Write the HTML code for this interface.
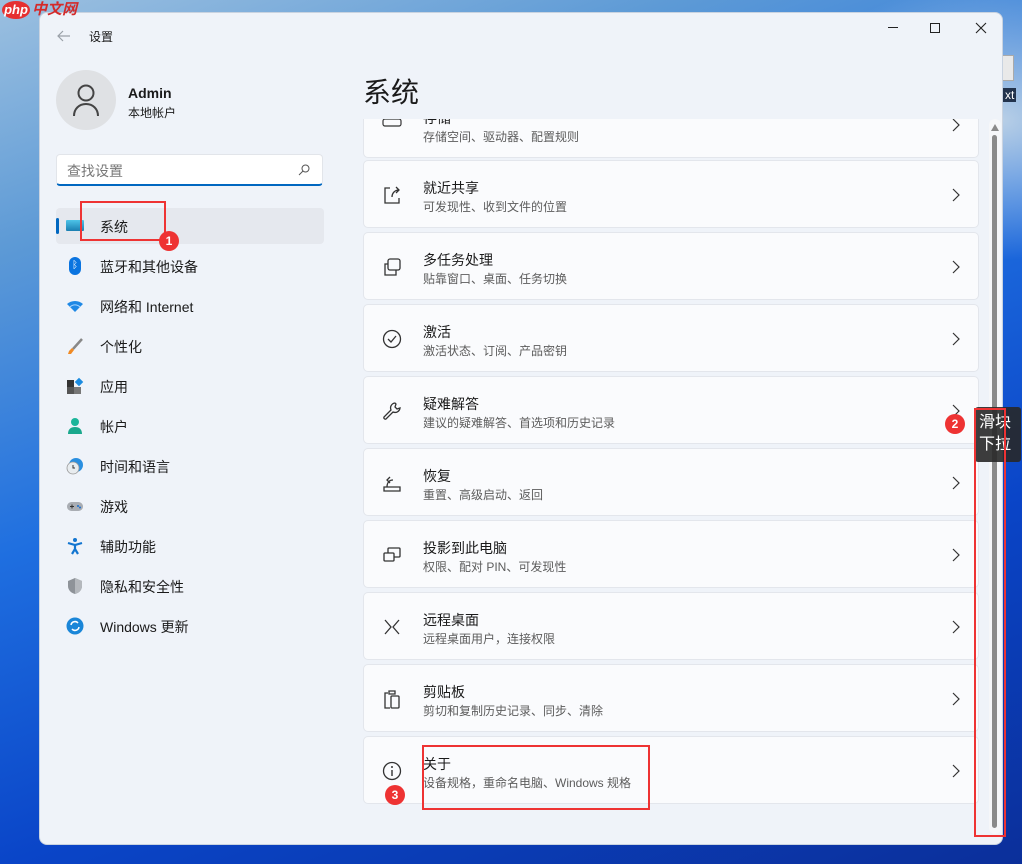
<!DOCTYPE html>
<html><head><meta charset="utf-8"><style>
*{box-sizing:border-box;margin:0;padding:0}
body{width:1022px;height:864px;overflow:hidden;position:relative;font-family:"Liberation Sans","Noto Sans CJK SC",sans-serif;
background:radial-gradient(ellipse 300px 200px at 1000px 120px,#b8cfe6 0%,transparent 70%),linear-gradient(160deg,#9cc0e0 0%,#5d9ad6 20%,#1f6fe0 45%,#0a45c8 70%,#0b2f9a 100%);}
.win{position:absolute;left:39px;top:12px;width:964px;height:833px;background:#eff3f9;border-radius:8px;overflow:hidden;border:1px solid #c9d3e0}
.abs{position:absolute}
.t{color:#1a1a1a}
.nav{position:absolute;left:16px;width:268px;height:36px;font-size:14px;color:#1a1a1a}
.nav .ic{position:absolute;left:10px;top:9px;width:18px;height:18px}
.nav span{position:absolute;left:44px;top:9px}
.card{position:absolute;left:323px;width:616px;height:68px;background:#fafbfd;border:1px solid #e3e6ec;border-radius:5px}
.card .h{position:absolute;left:59px;top:17px;font-size:14px;color:#1a1a1a}
.card .s{position:absolute;left:59px;top:37px;font-size:12px;color:#5c5c5c}
.card .ico{position:absolute;left:18px;top:24px;width:20px;height:20px}
.card .chev{position:absolute;right:18px;top:27px;width:8px;height:14px}
.red{position:absolute;border:2px solid #ee3333}
.badge{position:absolute;width:20px;height:20px;border-radius:50%;background:#ee3333;color:#fff;font-size:12px;text-align:center;line-height:20px;font-weight:bold}
</style></head><body>
<div class="abs" style="left:1000px;top:55px;width:14px;height:26px;background:#e9e9e9;border:1px solid #aaa"></div>
<div class="abs" style="left:1003px;top:88px;font-size:12px;color:#fff;background:#22334d;padding:0 2px">xt</div>

<div class="win">
 <svg class="abs" style="left:17px;top:17px" width="14" height="12"><path d="M13 6H1M6 1L1 6l5 5" stroke="#9aa0a8" stroke-width="1.2" fill="none"/></svg>
 <div class="abs t" style="left:49px;top:15px;font-size:12px">设置</div>
 <svg class="abs" style="left:848px;top:14px" width="12" height="2"><rect width="10" height="1" fill="#222"/></svg>
 <div class="abs" style="left:890px;top:10px;width:10px;height:10px;border:1px solid #222"></div>
 <svg class="abs" style="left:935px;top:9px" width="12" height="12"><path d="M1 1l10 10M11 1L1 11" stroke="#222" stroke-width="1.1"/></svg>

 <div class="abs" style="left:16px;top:57px;width:60px;height:60px;border-radius:50%;background:#dfe1e4"></div>
 <svg class="abs" style="left:31px;top:70px" width="30" height="34"><circle cx="15" cy="10" r="7.5" stroke="#444" stroke-width="2" fill="none"/><path d="M3 33c0-7 5-12 12-12s12 5 12 12" stroke="#444" stroke-width="2" fill="none"/></svg>
 <div class="abs t" style="left:88px;top:72px;font-size:14px;font-weight:bold">Admin</div>
 <div class="abs t" style="left:88px;top:91px;font-size:12px">本地帐户</div>

 <div class="abs" style="left:16px;top:141px;width:267px;height:32px;background:#fff;border:1px solid #e2e5ea;border-bottom:2px solid #0067c0;border-radius:4px"></div>
 <div class="abs" style="left:27px;top:148px;font-size:14px;color:#777">查找设置</div>
 <svg class="abs" style="left:258px;top:151px" width="12" height="12"><circle cx="7.5" cy="4.5" r="3.5" stroke="#555" fill="none"/><path d="M5 7L1 11" stroke="#555"/></svg>

 <div class="nav" style="top:195px;background:#e5e8ee;border-radius:4px"><div class="abs" style="left:0;top:10px;width:3px;height:16px;background:#0067c0;border-radius:2px"></div><div class="ic" style="top:12px;height:11px;background:linear-gradient(#4ec4e8,#1b7fb2);border-radius:1px"></div><span>系统</span></div>
 <div class="nav" style="top:235px"><div class="ic" style="left:13px;width:12px;border-radius:6px;background:#0a74e0;color:#fff;font-size:10px;text-align:center;line-height:18px">ᛒ</div><span>蓝牙和其他设备</span></div>
 <div class="nav" style="top:275px"><svg class="ic" viewBox="0 0 18 18"><path d="M1 7a12 12 0 0 1 16 0L9 15z" fill="#1e88e5"/><path d="M4 10a7 7 0 0 1 10 0" stroke="#a9d6ff" fill="none"/></svg><span>网络和 Internet</span></div>
 <div class="nav" style="top:315px"><svg class="ic" viewBox="0 0 18 18"><path d="M16 2L7 12" stroke="#888" stroke-width="2.5"/><path d="M6 11l2 2-3 4-3 0 1-3z" fill="#f08a24"/></svg><span>个性化</span></div>
 <div class="nav" style="top:355px"><svg class="ic" viewBox="0 0 18 18"><rect x="1" y="3" width="7" height="7" fill="#333"/><rect x="1" y="10" width="7" height="7" fill="#555"/><rect x="8" y="10" width="7" height="7" fill="#777"/><rect x="10" y="2" width="6" height="6" fill="#1b8be0" transform="rotate(45 13 5)"/></svg><span>应用</span></div>
 <div class="nav" style="top:395px"><svg class="ic" viewBox="0 0 18 18"><circle cx="9" cy="5" r="4" fill="#1bb59a"/><path d="M2 17c0-5 3-7 7-7s7 2 7 7z" fill="#1aa88d"/></svg><span>帐户</span></div>
 <div class="nav" style="top:435px"><svg class="ic" viewBox="0 0 18 18"><circle cx="10" cy="8" r="7" fill="#2a8fe0"/><circle cx="7" cy="11" r="6" fill="#e8ecef" stroke="#999" stroke-width=".8"/><path d="M7 8v3h2" stroke="#333" fill="none"/></svg><span>时间和语言</span></div>
 <div class="nav" style="top:475px"><svg class="ic" viewBox="0 0 18 18"><rect x="1" y="5" width="16" height="9" rx="4.5" fill="#a9adb3"/><path d="M4 9.5h4M6 7.5v4" stroke="#333"/><circle cx="12" cy="9" r="1" fill="#1b6fd0"/><circle cx="14" cy="10.5" r="1" fill="#1b6fd0"/></svg><span>游戏</span></div>
 <div class="nav" style="top:515px"><svg class="ic" viewBox="0 0 18 18"><circle cx="9" cy="3" r="2" fill="#1275d0"/><path d="M2 6l7 2 7-2M9 8v4l-3 5M9 12l3 5" stroke="#1275d0" stroke-width="2.2" fill="none"/></svg><span>辅助功能</span></div>
 <div class="nav" style="top:555px"><svg class="ic" viewBox="0 0 18 18"><path d="M9 1l7 3v5c0 4-3 7-7 8-4-1-7-4-7-8V4z" fill="#8e9399"/><path d="M9 1l7 3v5c0 4-3 7-7 8z" fill="#b4b8bd"/></svg><span>隐私和安全性</span></div>
 <div class="nav" style="top:595px"><svg class="ic" viewBox="0 0 18 18"><circle cx="9" cy="9" r="8.5" fill="#1a86d8"/><path d="M5 8a4 4 0 0 1 7-2M13 10a4 4 0 0 1-7 2" stroke="#fff" stroke-width="1.5" fill="none"/></svg><span>Windows 更新</span></div>

 <div class="abs t" style="left:323px;top:58px;font-size:28px">系统</div>

 <div class="abs" style="left:0;top:106px;width:964px;height:727px;overflow:hidden">
  <div class="card" style="top:-29px"><svg class="ico" viewBox="0 0 20 20" style="top:22px"><rect x="1" y="6" width="18" height="7" rx="2" stroke="#333" fill="none" stroke-width="1.2"/></svg><div class="h">存储</div><div class="s">存储空间、驱动器、配置规则</div><svg class="chev" viewBox="0 0 8 14"><path d="M1 1l6 6-6 6" stroke="#333" fill="none" stroke-width="1.2"/></svg></div>
  <div class="card" style="top:41px"><svg class="ico" viewBox="0 0 20 20"><path d="M8 3H3v15h14v-5M10 12c0-4 3-7 7-7M14 2l3 3-3 3" stroke="#333" fill="none" stroke-width="1.3"/></svg><div class="h">就近共享</div><div class="s">可发现性、收到文件的位置</div><svg class="chev" viewBox="0 0 8 14"><path d="M1 1l6 6-6 6" stroke="#333" fill="none" stroke-width="1.2"/></svg></div>
  <div class="card" style="top:113px"><svg class="ico" viewBox="0 0 20 20"><rect x="6" y="2" width="12" height="11" rx="2" stroke="#333" fill="none" stroke-width="1.3"/><path d="M6 7H3v11h11v-5" stroke="#333" fill="none" stroke-width="1.3"/></svg><div class="h">多任务处理</div><div class="s">贴靠窗口、桌面、任务切换</div><svg class="chev" viewBox="0 0 8 14"><path d="M1 1l6 6-6 6" stroke="#333" fill="none" stroke-width="1.2"/></svg></div>
  <div class="card" style="top:185px"><svg class="ico" viewBox="0 0 20 20"><circle cx="10" cy="10" r="8.5" stroke="#333" fill="none" stroke-width="1.3"/><path d="M6 10l3 3 5-6" stroke="#333" fill="none" stroke-width="1.3"/></svg><div class="h">激活</div><div class="s">激活状态、订阅、产品密钥</div><svg class="chev" viewBox="0 0 8 14"><path d="M1 1l6 6-6 6" stroke="#333" fill="none" stroke-width="1.2"/></svg></div>
  <div class="card" style="top:257px"><svg class="ico" viewBox="0 0 20 20"><path d="M13 2a5 5 0 0 0-4 7L2 16a1.5 1.5 0 0 0 2 2l7-7a5 5 0 0 0 7-4l-3 1-2-2 1-3z" stroke="#333" fill="none" stroke-width="1.3"/></svg><div class="h">疑难解答</div><div class="s">建议的疑难解答、首选项和历史记录</div><svg class="chev" viewBox="0 0 8 14"><path d="M1 1l6 6-6 6" stroke="#333" fill="none" stroke-width="1.2"/></svg></div>
  <div class="card" style="top:329px"><svg class="ico" viewBox="0 0 20 20"><path d="M2 14h16v4H2zM5 14c0-4 2-7 6-7M8 4L5 7l3 3" stroke="#333" fill="none" stroke-width="1.3"/></svg><div class="h">恢复</div><div class="s">重置、高级启动、返回</div><svg class="chev" viewBox="0 0 8 14"><path d="M1 1l6 6-6 6" stroke="#333" fill="none" stroke-width="1.2"/></svg></div>
  <div class="card" style="top:401px"><svg class="ico" viewBox="0 0 20 20"><rect x="6" y="3" width="12" height="9" rx="1" stroke="#333" fill="none" stroke-width="1.3"/><rect x="2" y="8" width="10" height="8" rx="1" stroke="#333" fill="#fafbfd" stroke-width="1.3"/></svg><div class="h">投影到此电脑</div><div class="s">权限、配对 PIN、可发现性</div><svg class="chev" viewBox="0 0 8 14"><path d="M1 1l6 6-6 6" stroke="#333" fill="none" stroke-width="1.2"/></svg></div>
  <div class="card" style="top:473px"><svg class="ico" viewBox="0 0 20 20"><path d="M3 3l6 7-6 7M17 3l-6 7 6 7" stroke="#333" fill="none" stroke-width="1.3"/></svg><div class="h">远程桌面</div><div class="s">远程桌面用户，连接权限</div><svg class="chev" viewBox="0 0 8 14"><path d="M1 1l6 6-6 6" stroke="#333" fill="none" stroke-width="1.2"/></svg></div>
  <div class="card" style="top:545px"><svg class="ico" viewBox="0 0 20 20"><path d="M6 4H3v15h5M7 2h6v3H7z" stroke="#333" fill="none" stroke-width="1.3"/><rect x="9" y="7" width="8" height="12" rx="1" stroke="#333" fill="none" stroke-width="1.3"/></svg><div class="h">剪贴板</div><div class="s">剪切和复制历史记录、同步、清除</div><svg class="chev" viewBox="0 0 8 14"><path d="M1 1l6 6-6 6" stroke="#333" fill="none" stroke-width="1.2"/></svg></div>
  <div class="card" style="top:617px"><svg class="ico" viewBox="0 0 20 20"><circle cx="10" cy="10" r="8.5" stroke="#333" fill="none" stroke-width="1.3"/><path d="M10 9v6" stroke="#333" stroke-width="1.4"/><circle cx="10" cy="6" r="1" fill="#333"/></svg><div class="h">关于</div><div class="s">设备规格，重命名电脑、Windows 规格</div><svg class="chev" viewBox="0 0 8 14"><path d="M1 1l6 6-6 6" stroke="#333" fill="none" stroke-width="1.2"/></svg></div>
 </div>
 <div class="abs" style="left:949px;top:106px;width:12px;height:715px;background:#f6f7f9;border-radius:6px"></div>
 <svg class="abs" style="left:951px;top:111px" width="8" height="7"><path d="M4 0L8 7H0z" fill="#8a8a8a"/></svg>
 <div class="abs" style="left:952px;top:122px;width:5px;height:693px;background:#8a8a8a;border-radius:3px"></div>
</div>

<div class="abs" style="left:2px;top:1px;width:28px;height:18px;background:#e63030;border-radius:50%;color:#fff;font-size:13px;font-style:italic;font-weight:bold;text-align:center;line-height:17px;z-index:5">php</div>
<div class="abs" style="left:32px;top:2px;font-size:15px;line-height:16px;color:#d42a2a;font-style:italic;font-weight:bold;z-index:5">中文网</div>
<div class="red" style="left:80px;top:201px;width:86px;height:40px"></div>
<div class="badge" style="left:159px;top:231px">1</div>
<div class="abs" style="left:975px;top:407px;width:46px;height:55px;background:rgba(40,40,40,.9);border-radius:3px;color:#fff;font-size:16px;line-height:22px;padding:5px 0 0 4px">滑块<br>下拉</div>
<div class="red" style="left:974px;top:408px;width:32px;height:429px"></div>
<div class="badge" style="left:945px;top:414px">2</div>
<div class="red" style="left:422px;top:745px;width:228px;height:65px"></div>
<div class="badge" style="left:385px;top:785px">3</div>
</body></html>
